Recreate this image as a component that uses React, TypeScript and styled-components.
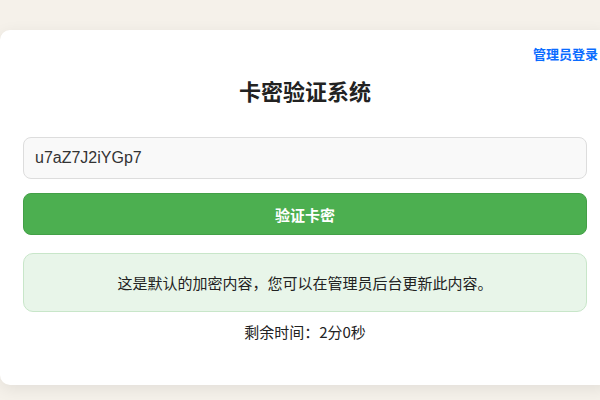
import React from "react";
import styled, { createGlobalStyle } from "styled-components";

const GlobalStyle = createGlobalStyle`
  html, body {
    margin: 0;
    padding: 0;
    overflow: hidden;
    background: #f5f1ea;
    font-family: "Microsoft YaHei", "Liberation Sans", "Noto Sans CJK SC", sans-serif;
    color: #333;
  }
`;

const Page = styled.div`
  width: 600px;
  height: 400px;
  padding-top: 30px;
  box-sizing: border-box;
`;

const Card = styled.div`
  position: relative;
  width: 610px;
  box-sizing: border-box;
  padding: 45px 23px 43px;
  background: #fff;
  border-radius: 10px;
  box-shadow: 0 4px 16px rgba(0, 0, 0, 0.08);
`;

const AdminLink = styled.a`
  position: absolute;
  top: 15px;
  right: 12px;
  font-size: 13px;
  line-height: 18px;
  font-weight: bold;
  color: #0a6cff;
  text-decoration: none;
  font-family: "Noto Sans CJK SC", sans-serif;
`;

const Title = styled.h1`
  margin: 0 0 32px;
  text-align: center;
  font-size: 22px;
  line-height: 30px;
  font-weight: bold;
  color: #222;
  font-family: "Noto Sans CJK SC", sans-serif;
`;

const CodeInput = styled.input`
  display: block;
  width: 100%;
  height: 42px;
  box-sizing: border-box;
  padding: 0 11px;
  border: 1px solid #ddd;
  border-radius: 8px;
  background: #f9f9f9;
  font-family: "Liberation Sans", Arial, sans-serif;
  font-size: 16px;
  color: #333;
  outline: none;
`;

const VerifyButton = styled.button`
  display: block;
  width: 100%;
  height: 42px;
  margin-top: 14px;
  border: 1px solid #43a047;
  border-radius: 8px;
  background: #4caf50;
  color: #fff;
  font-size: 15px;
  font-weight: bold;
  font-family: "Noto Sans CJK SC", sans-serif;
  cursor: pointer;
`;

const Message = styled.div`
  margin-top: 18px;
  padding: 18px 10px;
  border: 1px solid #c8e6c9;
  border-radius: 10px;
  background: #e8f5e9;
  text-align: center;
  font-size: 15px;
  line-height: 21px;
  color: #222;
  font-family: "Noto Sans CJK SC", sans-serif;
`;

const Timer = styled.div`
  margin-top: 10px;
  text-align: center;
  font-size: 15px;
  line-height: 20px;
  color: #222;
  font-family: "Noto Sans CJK SC", sans-serif;
`;

export default function App() {
  return (
    <>
      <GlobalStyle />
      <Page>
        <Card>
          <AdminLink href="#">管理员登录</AdminLink>
          <Title>卡密验证系统</Title>
          <CodeInput defaultValue="u7aZ7J2iYGp7" />
          <VerifyButton>验证卡密</VerifyButton>
          <Message>这是默认的加密内容，您可以在管理员后台更新此内容。</Message>
          <Timer>剩余时间：2分0秒</Timer>
        </Card>
      </Page>
    </>
  );
}
